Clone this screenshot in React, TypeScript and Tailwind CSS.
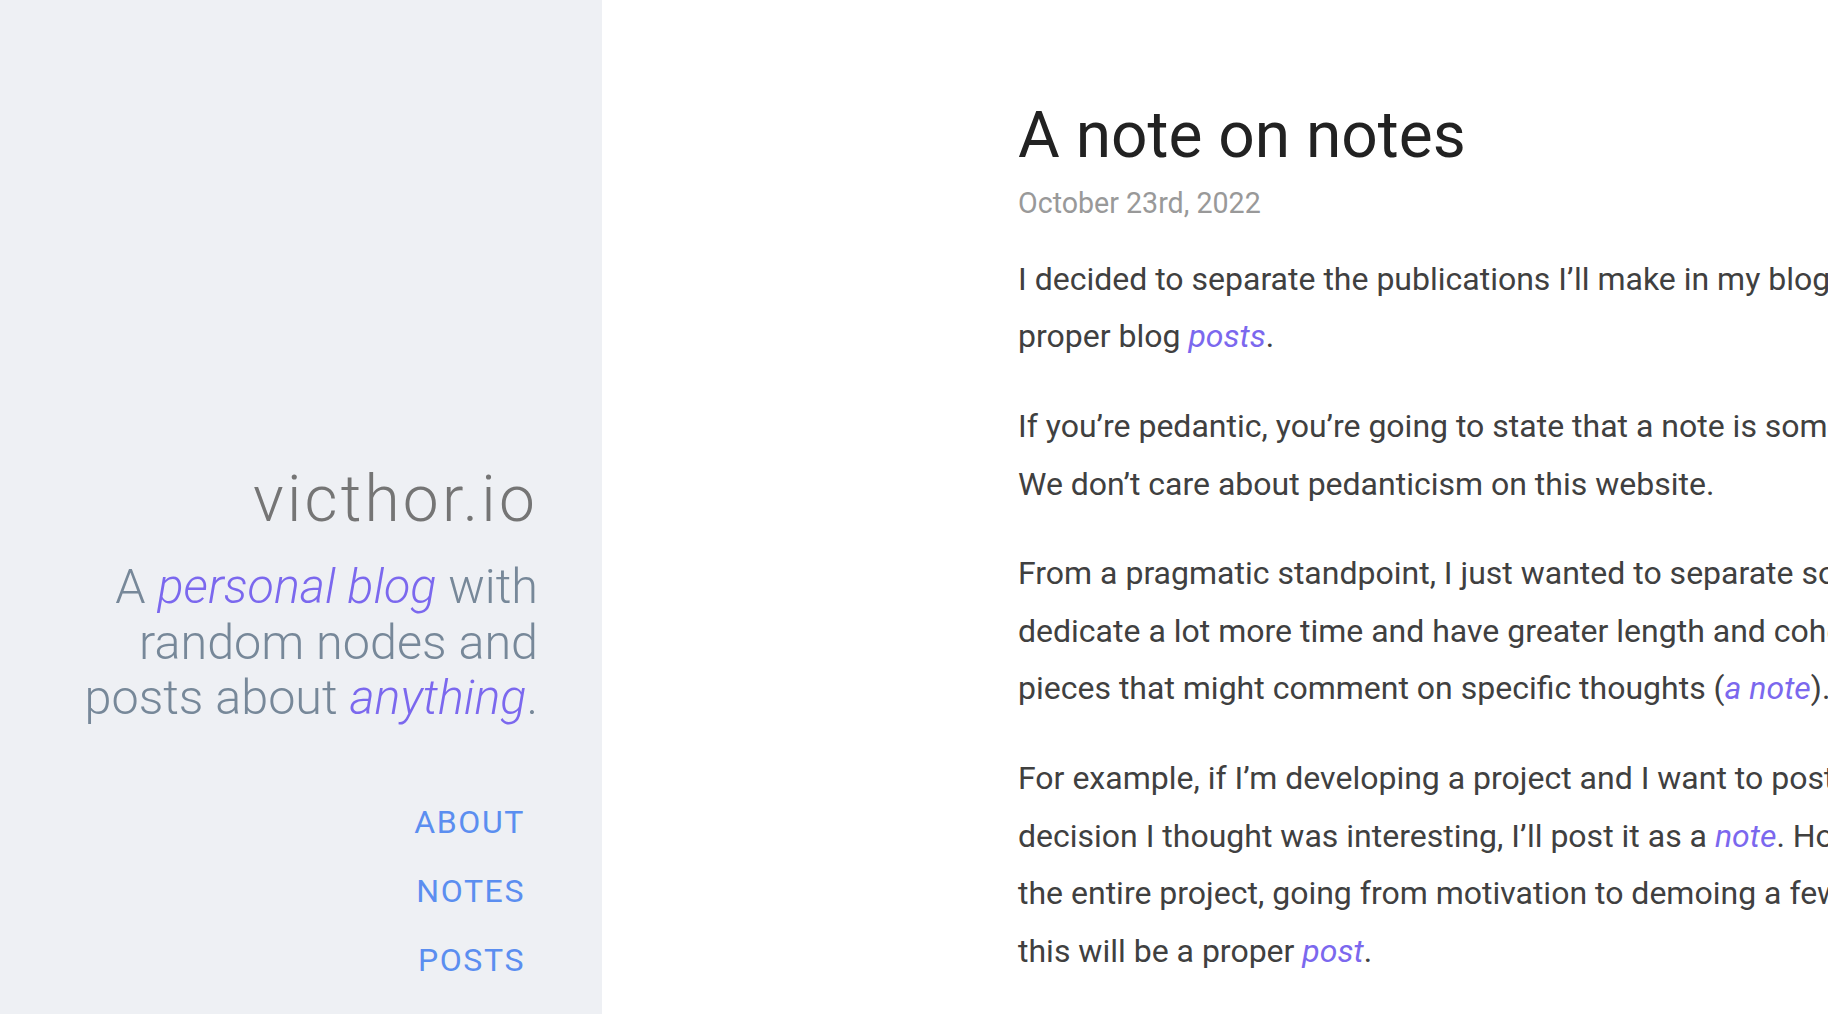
const font = { fontFamily: 'Roboto, "Noto Sans", sans-serif' };

function Sidebar() {
  return (
    <aside className="flex h-full w-[602px] shrink-0 flex-col justify-end bg-[#eef0f4] pb-[31px] pr-[64px] text-right">
      <h1 className="text-[64px] leading-[76.8px] font-light tracking-[0.05em] text-[#757575]">victhor.io</h1>
      <p className="mt-[21px] text-[48.5px] leading-[55.2px] font-light text-[#778899]">
        A <em className="text-[#7b68ee]">personal blog</em> with
        <br />
        random nodes and
        <br />
        posts about <em className="text-[#7b68ee]">anything</em>.
      </p>
      <nav className="mt-[75px] flex flex-col items-end gap-[24px] pr-[13px]">
        {['About', 'Notes', 'Posts'].map((item) => (
          <a key={item} href="#" className="text-[32px] leading-[45px] uppercase tracking-[0.05em] text-[#5b8ef0]">
            {item}
          </a>
        ))}
      </nav>
    </aside>
  );
}

const Link = ({ children }: { children: string }) => <em className="text-[#7b68ee]">{children}</em>;

export default function App() {
  return (
    <div className="flex h-screen w-full overflow-hidden bg-white" style={font}>
      <Sidebar />
      <main className="min-w-0 flex-1 pl-[416px] pt-[98px]">
        <article className="w-[1900px]">
          <h2 className="text-[64px] leading-[76.8px] text-[#222222]">A note on notes</h2>
          <p className="mt-[7px] text-[28.6px] leading-[42px] text-[#999999]">October 23rd, 2022</p>
          <div className="mt-[27px] space-y-[32px] text-[32px] leading-[57.6px] text-[#404040]">
            <p>
              I decided to separate the publications I’ll make in my blog into two categories: notes and
              <br />
              proper blog <Link>posts</Link>.
            </p>
            <p>
              If you’re pedantic, you’re going to state that a note is some kind of blog post.
              <br />
              We don’t care about pedanticism on this website.
            </p>
            <p>
              From a pragmatic standpoint, I just wanted to separate some longer pieces, where I’ll
              <br />
              dedicate a lot more time and have greater length and coherence (<Link>a post</Link>), from
              <br />
              pieces that might comment on specific thoughts (<Link>a note</Link>).
            </p>
            <p>
              For example, if I’m developing a project and I want to post about a specific
              <br />
              decision I thought was interesting, I’ll post it as a <Link>note</Link>. However, if I write about
              <br />
              the entire project, going from motivation to demoing a few features,
              <br />
              this will be a proper <Link>post</Link>.
            </p>
          </div>
        </article>
      </main>
    </div>
  );
}
